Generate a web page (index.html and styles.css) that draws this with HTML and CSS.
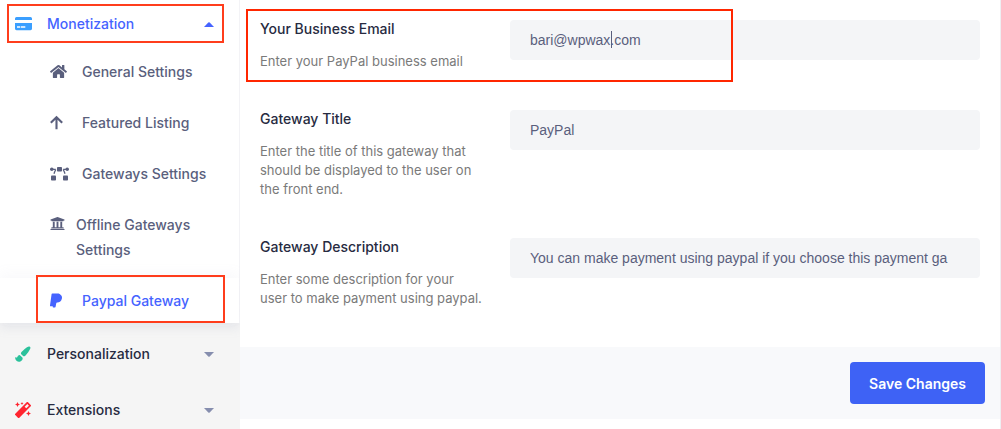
FILE: index.html
```html
<!DOCTYPE html>
<html lang="en">
<head>
<meta charset="utf-8">
<meta name="viewport" content="width=device-width, initial-scale=1">
<title>Paypal Gateway Settings</title>
<link rel="stylesheet" href="styles.css">
</head>
<body>
<div class="layout">
  <nav class="sidebar" aria-label="Settings">
    <div class="group">
      <a class="head head-open marked mark-head" href="#monetization">
        <svg class="icon" viewBox="0 0 17 14" width="17" height="14" aria-hidden="true"><path fill="#3b9fff" d="M1.500 0h14Q17 0 17 1.500V3H0V1.500Q0 0 1.500 0zM0 6h17v5.800q0 1.400-1.500 1.400h-14Q0 13.200 0 11.800z"/><path fill="#fff" d="M2 9.300h3.300v1.500H2zM6 9.300h4.300v1.500H6z"/></svg>
        <span>Monetization</span>
        <svg class="arrow" viewBox="0 0 10 5" width="10" height="5" aria-hidden="true"><path fill="#4563ff" d="M0 5 4.300.6q.7-.7 1.400 0L10 5z"/></svg>
      </a>
      <ul class="submenu">
        <li><a class="sub" href="#general">
          <svg class="icon" viewBox="0 0 576 512" width="17" height="15" aria-hidden="true"><path fill="currentColor" d="M280.400 148.300 96 300.100V464a16 16 0 0 0 16 16l112-.3a16 16 0 0 0 16-16V368a16 16 0 0 1 16-16h64a16 16 0 0 1 16 16v95.600a16 16 0 0 0 16 16.100l112 .3a16 16 0 0 0 16-16V300L295.700 148.300a12.200 12.200 0 0 0-15.300 0zM571.600 251.500 488 182.600V44a12 12 0 0 0-12-12h-56a12 12 0 0 0-12 12v72.600L318.500 43a48 48 0 0 0-61 0L4.300 251.500a12 12 0 0 0-1.600 16.900l25.500 31a12 12 0 0 0 16.900 1.600l235.200-193.700a12.200 12.200 0 0 1 15.300 0l235.300 193.700a12 12 0 0 0 16.900-1.600l25.500-31a12 12 0 0 0-1.700-16.900z"/></svg>
          <span>General Settings</span></a></li>
        <li><a class="sub" href="#featured">
          <svg class="icon" viewBox="0 0 14 15" width="14" height="15" aria-hidden="true"><path fill="none" stroke="currentColor" stroke-width="2.100" d="M.8 7.800 6.500 2.200l5.700 5.600M6.500 2.200v12"/></svg>
          <span>Featured Listing</span></a></li>
        <li><a class="sub" href="#gateways">
          <svg class="icon" viewBox="0 0 19 14" width="19" height="14" aria-hidden="true"><g fill="currentColor"><rect x="7" y="0" width="5" height="4.500" rx=".8"/><rect x="1" y="8.500" width="5" height="5" rx=".8"/><rect x="13" y="8.500" width="5" height="5" rx=".8"/><circle cx="1.800" cy="2.300" r="1.800"/><circle cx="17.200" cy="2.300" r="1.800"/></g><path fill="none" stroke="currentColor" stroke-width="1.300" d="M2 2.300h3.800M13.200 2.300H17M5.800 2.500Q4.600 4.800 4 6.800M13.200 2.500Q14.400 4.800 15 6.800"/></svg>
          <span>Gateways Settings</span></a></li>
        <li><a class="sub sub-tall" href="#offline">
          <svg class="icon" viewBox="0 0 512 512" width="15" height="15" aria-hidden="true"><path fill="currentColor" d="M496 128v16a8 8 0 0 1-8 8h-24v12c0 6.600-5.400 12-12 12H60c-6.600 0-12-5.400-12-12v-12H24a8 8 0 0 1-8-8v-16a8 8 0 0 1 4.900-7.400l232-88a8 8 0 0 1 6.200 0l232 88A8 8 0 0 1 496 128zm-24 304H40c-13.300 0-24 10.700-24 24v16a8 8 0 0 0 8 8h464a8 8 0 0 0 8-8v-16c0-13.300-10.700-24-24-24zM96 192v192H60c-6.600 0-12 5.400-12 12v20h416v-20c0-6.600-5.400-12-12-12h-36V192h-64v192h-64V192h-64v192h-64V192z"/></svg>
          <span>Offline Gateways Settings</span></a></li>
        <li><a class="sub sub-active marked mark-sub" href="#paypal" aria-current="page">
          <svg class="icon" viewBox="0 0 12 15" width="12" height="15" aria-hidden="true"><path fill="currentColor" d="M1.600 1Q1.700.4 2.300.4h5.200c1.700 0 2.900.5 3.200 1.700 1.100.8 1.500 2 1.200 3.500-.5 2.800-2.300 3.900-4.700 3.900-.6 0-.9.300-1 .9l-.6 3.400q-.1.700-.7.700H3.200q-.6 0-.5-.6l.1-.7H.5q-.6 0-.5-.6z"/></svg>
          <span>Paypal Gateway</span></a></li>
      </ul>
    </div>
    <div class="more">
      <a class="head" href="#personalization">
        <svg class="icon" viewBox="0 0 16 16" width="16" height="16" aria-hidden="true"><path fill="#2bc19b" d="M13.800.5c1.300-.4 2 .9 1.500 2.100-1 2.300-2.900 5.200-5 7.100q-1.100.9-2 .5L6 8.100q-.4-.9.500-2C8.300 3.900 11.600 1.200 13.800.5zM4.700 9.100l2.900 2.600c.5 2.300-1.500 4-3.800 4-2.500 0-3.700-1.800-3.700-4.600 1.200.8 1.900.6 2.300-.2.500-1 1.200-1.800 2.300-1.800z"/></svg>
        <span>Personalization</span>
        <svg class="arrow" viewBox="0 0 10 5" width="10" height="5" aria-hidden="true"><path fill="#868eae" d="M0 0h10L5.700 4.400q-.7.700-1.400 0z"/></svg>
      </a>
      <a class="head" href="#extensions">
        <svg class="icon" viewBox="0 0 512 512" width="16" height="16" aria-hidden="true"><path fill="#ff2530" d="m224 96 16-32 32-16-32-16L224 0l-16 32-32 16 32 16zM80 160l26.700-53.300L160 80l-53.300-26.700L80 0 53.300 53.300 0 80l53.300 26.700zm352 128-26.700 53.300L352 368l53.300 26.700L432 448l26.700-53.300L512 368l-53.300-26.700zm70.600-193.800L417.800 9.400a32 32 0 0 0-45.200 0L9.400 372.600a32 32 0 0 0 0 45.200l84.800 84.800a32 32 0 0 0 45.200 0l363.200-363.200a32 32 0 0 0 0-45.200zM359.500 203.500l-50.900-50.900 86.600-86.600 50.900 50.900z"/></svg>
        <span>Extensions</span>
        <svg class="arrow" viewBox="0 0 10 5" width="10" height="5" aria-hidden="true"><path fill="#868eae" d="M0 0h10L5.700 4.400q-.7.700-1.400 0z"/></svg>
      </a>
    </div>
  </nav>
  <main class="content">
    <form>
      <div class="fields">
        <div class="field marked mark-field">
          <div class="about">
            <label for="email">Your Business Email</label>
            <p id="email-help">Enter your PayPal business email</p>
          </div>
          <div class="control caret"><input id="email" type="text" value="bari@wpwax.com" aria-describedby="email-help"></div>
        </div>
        <div class="field">
          <div class="about">
            <label for="title">Gateway Title</label>
            <p id="title-help">Enter the title of this gateway that should be displayed to the user on the front end.</p>
          </div>
          <div class="control"><input id="title" type="text" value="PayPal" aria-describedby="title-help"></div>
        </div>
        <div class="field">
          <div class="about">
            <label for="description">Gateway Description</label>
            <p id="description-help">Enter some description for your user to make payment using paypal.</p>
          </div>
          <div class="control"><input id="description" type="text" value="You can make payment using paypal if you choose this payment ga" aria-describedby="description-help"></div>
        </div>
      </div>
      <div class="actions"><button type="submit">Save Changes</button></div>
    </form>
  </main>
</div>
</body>
</html>
```
FILE: styles.css
```css
* {
  box-sizing: border-box;
}

body {
  margin: 0;
  background: #fff;
  color: #272b41;
  font: 500 14px/18px Inter, "Liberation Sans", sans-serif;
}

a {
  color: inherit;
  text-decoration: none;
}

.layout {
  display: flex;
  min-height: 100vh;
}

.sidebar {
  flex: 0 0 240px;
  background: #f5f5f5;
}

.group {
  background: #fff;
  border-right: 1px solid #f3f3f6;
  box-shadow: 0 5px 10px rgba(146, 153, 184, 0.15);
}

.head {
  display: flex;
  align-items: center;
  height: 38px;
  padding: 0 26px 0 15px;
}

.head .icon {
  margin-right: auto;
}

.head span {
  flex: 0 0 157px;
}

.head .arrow {
  flex: none;
}

.head-open {
  height: 48px;
  padding-right: 25px;
  color: #4563ff;
}

.submenu {
  display: flex;
  flex-direction: column;
  gap: 6px;
  margin: 0;
  padding: 1px 0 0;
  list-style: none;
}

.sub {
  display: grid;
  grid-template-columns: 32px 1fr;
  align-items: center;
  padding: 10px 30px 10px 50px;
  color: #5a5f7d;
  line-height: 25px;
}

.sub-tall {
  grid-template-columns: 26px 1fr;
  align-items: start;
}

.sub-tall .icon {
  margin-top: 4px;
}

.sub-active {
  padding-right: 20px;
  color: #4563ff;
  box-shadow: 0 -5px 12px rgba(146, 153, 184, 0.06);
}

.more {
  display: flex;
  flex-direction: column;
  gap: 18px;
  padding-top: 12px;
}

.marked {
  position: relative;
}

.marked::after {
  content: "";
  position: absolute;
  border: 2px solid #ff3d1c;
  pointer-events: none;
}

.mark-head::after {
  inset: 4px 15px 5px 7px;
}

.mark-sub::after {
  inset: -3px 14px 0 36px;
}

.mark-field::after {
  inset: -11px 247px -11px -14px;
  border-color: #ff2600;
}

.content {
  position: relative;
  flex: 1;
  min-width: 0;
  background: #fff;
  border-right: 1px solid #eeeff2;
}

form {
  margin: 0;
}

.fields {
  display: flex;
  flex-direction: column;
  gap: 39px;
  padding: 20px 20px 39px;
}

.field {
  display: grid;
  grid-template-columns: 224px 1fr;
  gap: 26px;
}

.about label {
  display: block;
}

.about p {
  margin: 14px 0 0;
  color: #7a7a7a;
  font-size: 13px;
  font-weight: 400;
  line-height: 19px;
}

.control {
  position: relative;
  height: 40px;
}

.control input {
  width: 100%;
  height: 40px;
  padding: 0 16px 0 20px;
  border: 0;
  border-radius: 4px;
  background: #f4f5f7;
  color: #5a5f7d;
  font: 400 14px "Liberation Sans", Arial, sans-serif;
}

.caret::after {
  content: "";
  position: absolute;
  top: 11px;
  left: 101px;
  width: 1px;
  height: 17px;
  background: #5a5f7d;
}

.actions {
  display: flex;
  justify-content: flex-end;
  padding: 15px;
  background: #f8f9fb;
}

.actions button {
  height: 42px;
  padding: 0 19px;
  border: 0;
  border-radius: 4px;
  background: #3e62f5;
  color: #fff;
  font: 600 14px Inter, "Liberation Sans", sans-serif;
}
```
